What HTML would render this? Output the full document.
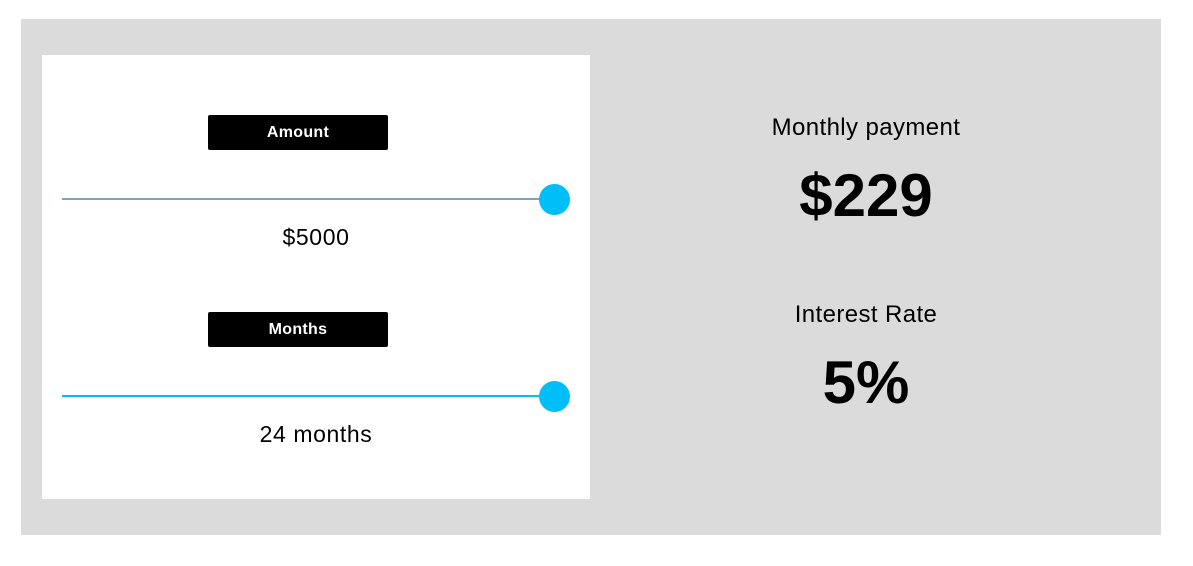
<!DOCTYPE html>
<html><head><style>
body{margin:0;width:1193px;height:566px;background:#fff;font-family:"Liberation Sans",Arial,sans-serif;position:relative;overflow:hidden}
.outer{position:absolute;left:21px;top:19px;width:1140px;height:516px;background:#dbdbdb}
.panel{position:absolute;left:42px;top:55px;width:548px;height:444px;background:#fff}
.lbl{position:absolute;left:208px;width:180px;height:35px;background:#000;color:#fff;border-radius:2px;font-weight:bold;font-size:16px;text-align:center;line-height:35px;letter-spacing:0.3px}
.line{position:absolute;left:62px;width:490px;height:2px}
.thumb{position:absolute;left:539px;width:31px;height:31px;border-radius:50%;background:#00bff8}
.val{position:absolute;left:62px;width:508px;text-align:center;font-size:23px;letter-spacing:0.6px;color:#000}
.rt{position:absolute;left:640px;width:452px;text-align:center;color:#000}
</style></head><body>
<div class="outer"></div>
<div class="panel"></div>
<div class="lbl" style="top:115px">Amount</div>
<div class="line" style="top:198px;background:#86a2b2"></div>
<div class="thumb" style="top:184px"></div>
<div class="val" style="top:224px">$5000</div>
<div class="lbl" style="top:312px">Months</div>
<div class="line" style="top:395px;background:#00bff8"></div>
<div class="thumb" style="top:381px"></div>
<div class="val" style="top:421px">24 months</div>
<div class="rt" style="top:114px;font-size:24px;letter-spacing:0.4px">Monthly payment</div>
<div class="rt" style="top:161px;font-size:60px;font-weight:bold">$229</div>
<div class="rt" style="top:301px;font-size:24px;letter-spacing:0.4px">Interest Rate</div>
<div class="rt" style="top:348px;font-size:60px;font-weight:bold">5%</div>
</body></html>
